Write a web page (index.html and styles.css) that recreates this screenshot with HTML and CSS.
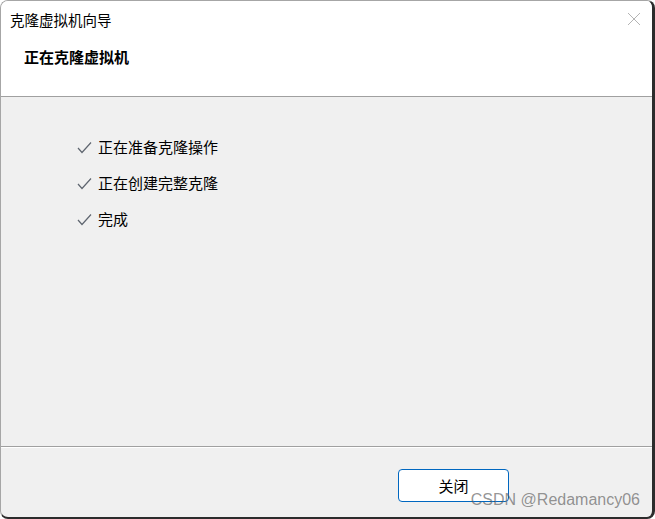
FILE: index.html
```html
<!DOCTYPE html>
<html lang="zh-CN">
<head>
    <meta charset="UTF-8">
    <meta name="viewport" content="width=device-width, initial-scale=1.0">
    <title>克隆虚拟机向导</title>
    <link rel="stylesheet" href="styles.css">
</head>
<body>
    <div class="window">
        <div class="titlebar">
            <span class="title">克隆虚拟机向导</span>
            <svg class="close" width="14" height="14" viewBox="0 0 14 14">
                <path d="M1 1 L13 13 M13 1 L1 13" stroke="#b4b4b4" stroke-width="1" fill="none"/>
            </svg>
        </div>
        <div class="header">正在克隆虚拟机</div>

        <div class="content">
            <ul class="steps">
                <li>
                    <svg class="check" width="15" height="13" viewBox="0 0 15 13">
                        <path d="M1 7 L5 11.5 L14 1.5" stroke="#5f6670" stroke-width="1.2" fill="none"/>
                    </svg>
                    正在准备克隆操作
                </li>
                <li>
                    <svg class="check" width="15" height="13" viewBox="0 0 15 13">
                        <path d="M1 7 L5 11.5 L14 1.5" stroke="#5f6670" stroke-width="1.2" fill="none"/>
                    </svg>
                    正在创建完整克隆
                </li>
                <li>
                    <svg class="check" width="15" height="13" viewBox="0 0 15 13">
                        <path d="M1 7 L5 11.5 L14 1.5" stroke="#5f6670" stroke-width="1.2" fill="none"/>
                    </svg>
                    完成
                </li>
            </ul>
        </div>

        <div class="footer">
            <button class="btn">关闭</button>
        </div>

        <div class="watermark">CSDN @Redamancy06</div>
    </div>
</body>
</html>
```

FILE: styles.css
```css
body {
    margin: 0;
    background-color: #fff;
    font-family: "Noto Sans CJK SC", "Liberation Sans", sans-serif;
    font-size: 15px;
    color: #000;
}

.window {
    position: relative;
    height: 519px;
    box-sizing: border-box;
    display: flex;
    flex-direction: column;
    border: 1px solid #a6a6a6;
    border-right: 3px solid #2c2c2c;
    border-bottom: 2px solid #2c2c2c;
    border-radius: 8px;
    overflow: hidden;
    background-color: #f0f0f0;
}

.titlebar {
    height: 37px;
    display: flex;
    align-items: center;
    justify-content: space-between;
    padding: 0 11px 0 9px;
    background-color: #fff;
}

.title {
    line-height: 20px;
    margin-top: 1px;
    font-size: 14.5px;
}

.close {
    margin-top: -1px;
}

.header {
    height: 59px;
    box-sizing: border-box;
    padding: 9px 23px 0;
    line-height: 20px;
    font-weight: bold;
    background-color: #fff;
    border-bottom: 1px solid #a0a0a0;
}

.content {
    flex: 1;
    border-bottom: 1px solid #a0a0a0;
}

.steps {
    list-style: none;
    margin: 0;
    padding: 40px 0 0 76px;
}

.steps li {
    display: flex;
    align-items: center;
    gap: 6px;
    line-height: 20px;
    margin-bottom: 16px;
}

.footer {
    height: 70px;
    box-sizing: border-box;
    border-top: 1px solid #fff;
    padding: 21px 0 0 397px;
}

.btn {
    width: 111px;
    height: 33px;
    background-color: #fff;
    border: 1.5px solid #0067c0;
    border-radius: 4px;
    font-family: inherit;
    font-size: 15px;
    color: #000;
    cursor: pointer;
}

.watermark {
    position: absolute;
    right: 12px;
    bottom: 8px;
    font-family: "Liberation Sans", Arial, sans-serif;
    font-size: 16px;
    color: rgba(90, 90, 90, 0.65);
}
```
